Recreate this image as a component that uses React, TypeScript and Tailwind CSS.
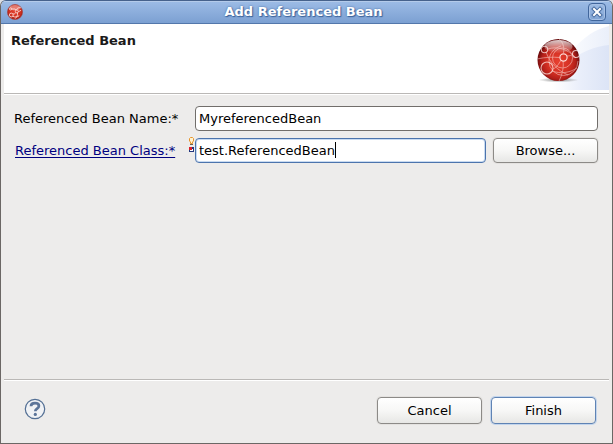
import { useState } from "react";
import type { ReactNode } from "react";
import clsx from "clsx";

const fieldClass =
  "h-[25px] w-full min-w-0 rounded-[4px] border bg-white px-[3px] text-[13px] text-black outline-none";

function TitleIcon() {
  return (
    <svg viewBox="0 0 16 16" className="size-4 shrink-0" aria-hidden="true">
      <defs>
        <radialGradient id="smallBall" cx="50%" cy="45%" r="55%">
          <stop offset="0" stopColor="#e5412f" />
          <stop offset="0.7" stopColor="#d0301f" />
          <stop offset="1" stopColor="#9c1c16" />
        </radialGradient>
      </defs>
      <circle cx="8" cy="8" r="7.6" fill="url(#smallBall)" stroke="#a8433f" strokeWidth="0.6" />
      <ellipse cx="8" cy="3.8" rx="5.4" ry="2.8" fill="#fff" opacity="0.35" />
      <g fill="none" stroke="#fbd5cf" strokeWidth="0.9">
        <circle cx="4.3" cy="11" r="1.9" />
        <circle cx="9.8" cy="7.4" r="1.5" />
        <circle cx="3.6" cy="4.9" r="1.1" />
        <path d="M4.7 5h3.400l1 1.200M11.200 7.800l2.900-1.500M10.500 9c.3 2.400-.7 4-2.300 5.600M6 10c1.400-.2 2 .2 2.700-1.500M5.800 12.300c2.100 1.100 4.400.8 6.400-.6M13.800 3.800c-1.900-.6-4 .2-4.500 2.100" />
      </g>
    </svg>
  );
}

function BannerArt() {
  return (
    <svg viewBox="0 0 75 66" className="h-[66px] w-[75px] shrink-0" aria-hidden="true">
      <defs>
        <linearGradient id="washFront" gradientUnits="userSpaceOnUse" x1="18" y1="0" x2="75" y2="0">
          <stop offset="0" stopColor="#fff" />
          <stop offset="0.5" stopColor="#e9eefa" />
          <stop offset="1" stopColor="#dce4f6" />
        </linearGradient>
        <linearGradient id="washBack" gradientUnits="userSpaceOnUse" x1="25" y1="0" x2="75" y2="0">
          <stop offset="0" stopColor="#fff" />
          <stop offset="1" stopColor="#eaeffa" />
        </linearGradient>
        <radialGradient id="ball" cx="50%" cy="55%" r="52%">
          <stop offset="0" stopColor="#e84232" />
          <stop offset="0.5" stopColor="#d63225" />
          <stop offset="0.78" stopColor="#b3201a" />
          <stop offset="1" stopColor="#65090b" />
        </radialGradient>
        <linearGradient id="gloss" x1="0" y1="0" x2="0" y2="1">
          <stop offset="0" stopColor="#fff" stopOpacity="0.8" />
          <stop offset="1" stopColor="#fff" stopOpacity="0.05" />
        </linearGradient>
        <radialGradient id="shadow">
          <stop offset="0" stopColor="#555" stopOpacity="0.7" />
          <stop offset="1" stopColor="#555" stopOpacity="0" />
        </radialGradient>
        <clipPath id="ballClip">
          <circle cx="24.500" cy="36" r="21" />
        </clipPath>
      </defs>
      <path d="M20 66C26 36 48 8 75 2v64z" fill="url(#washBack)" />
      <path d="M12 66C22 46 44 24 75 21v45z" fill="url(#washFront)" />
      <ellipse cx="24.500" cy="56" rx="20" ry="2.400" fill="url(#shadow)" />
      <circle cx="24.500" cy="36" r="21" fill="url(#ball)" />
      <ellipse cx="24.500" cy="22.500" rx="14" ry="6.500" fill="url(#gloss)" />
      <g clipPath="url(#ballClip)" fill="none" stroke="#ffe9e4">
        <g strokeWidth="0.8" opacity="0.6">
          <path d="M44 37a14.500 14.500 0 0 1-29 0c0-7 5-13 12-15" />
          <circle cx="28.500" cy="34" r="10" />
          <path d="M3 35c9-2 16-2 22.500-1.500M14 25c9-3 20 0 28 9M12 28c4 11 11 18 22 23M25 15c4 3 5.500 8 4.500 14M29 37c1 7-1 14-4 20M33 32c3 0 5-1 6-2M19 45c3-1 6-5 8-9M18 47c9 3 17 2 25-3" />
        </g>
        <circle cx="13" cy="44" r="6" strokeWidth="1.100" opacity="0.750" />
        <circle cx="29.500" cy="33.500" r="3.600" strokeWidth="1.200" opacity="0.900" />
        <circle cx="10.500" cy="25.500" r="3.200" strokeWidth="1.100" opacity="0.750" />
        <circle cx="42" cy="30" r="3.500" strokeWidth="1.100" opacity="0.800" />
      </g>
    </svg>
  );
}

function AssistMark() {
  return (
    <svg viewBox="0 0 6 17" className="absolute -top-px -left-1.5 h-[17px] w-1.5" aria-hidden="true">
      <path d="M1.500.5h2l1 1v2.500l-1 1v1.500h-2V5l-1-1V1.500z" fill="#fff3cf" stroke="#e6942d" />
      <path d="M1 7h3v1H1z" fill="#6a6252" />
      <path d="M0 10h5v5H0z" fill="#24377e" />
      <path d="M2 12h2v2H1v-1h1z" fill="#fff" />
      <path d="M0 10h3v3H0z" fill="#d9202a" />
    </svg>
  );
}

function PushButton({ primary, children }: { primary?: boolean; children: ReactNode }) {
  return (
    <button
      type="button"
      className={clsx(
        "w-[105px] shrink-0 rounded-[4px] border bg-linear-to-b from-white from-0% via-[#f7f7f6] via-50% to-[#e7e7e5] text-[13px] text-black",
        primary
          ? "border-[#5f83b4] shadow-[0_0_0_1px_#c3d5ec]"
          : "border-[#8c8a87] shadow-[0_0_0_1px_#e4e2e0]",
      )}
    >
      {children}
    </button>
  );
}

export default function App() {
  const [name, setName] = useState("MyreferencedBean");
  const [beanClass, setBeanClass] = useState("test.ReferencedBean");

  return (
    <div className="min-h-screen bg-[#dcdfe5] font-['DejaVu_Sans',sans-serif] text-[13px] leading-4 text-black">
      <div className="flex min-h-screen flex-col overflow-hidden rounded-t-[6px] border border-t-[#46628c] border-r-[#6b6765] border-b-[#6b6765] border-l-[#6b6765] bg-[#edeceb]">
        <header className="flex h-[23px] shrink-0 items-center border-b border-[#5377ab] bg-linear-to-b from-[#9dbce6] to-[#7ca0d2] px-1.5 shadow-[inset_0_1px_0_#b4cbea]">
          <TitleIcon />
          <h1 className="flex-1 pr-1 text-center text-[13px] font-bold text-white [text-shadow:0_0_2px_#3c639b,1px_1px_1px_#3c639b]">
            Add Referenced Bean
          </h1>
          <button
            type="button"
            aria-label="Close"
            className="flex size-[18px] items-center justify-center rounded-[4px] border border-[#41669c] bg-linear-to-b from-[#9dbbe3] to-[#81a4d4] shadow-[inset_0_0_0_1px_#a6c0e5]"
          >
            <svg viewBox="0 0 12 12" className="size-3" aria-hidden="true">
              <path d="M3 3l6 6M9 3l-6 6" stroke="#476b9f" strokeWidth="4" strokeLinecap="square" />
              <path d="M3 3l6 6M9 3l-6 6" stroke="#fff" strokeWidth="2" strokeLinecap="square" />
            </svg>
          </button>
        </header>

        <main className="mx-[3px] flex flex-1 flex-col">
          <section className="flex h-[69px] items-start justify-between bg-white pl-[7px]">
            <h2 className="pt-[9px] text-[13px] font-bold text-[#1a1a1a]">Referenced Bean</h2>
            <BannerArt />
          </section>

          <form
            className="grid flex-1 grid-cols-[174px_1fr] content-start items-center gap-[7px] border-t border-[#bab8b6] pt-3 pr-[11px] pl-2.5 shadow-[inset_0_1px_0_#fff]"
            onSubmit={(e) => e.preventDefault()}
          >
            <label htmlFor="bean-name">Referenced Bean Name:*</label>
            <input
              id="bean-name"
              className={clsx(fieldClass, "border-[#716e6b]")}
              value={name}
              onChange={(e) => setName(e.target.value)}
            />

            <label htmlFor="bean-class" className="pl-px">
              <a href="#bean-class" className="text-[#00007f] underline decoration-1 underline-offset-2 [text-decoration-skip-ink:none]">
                Referenced Bean Class:*
              </a>
            </label>
            <div className="flex gap-[7px]">
              <div className="relative flex-1">
                <AssistMark />
                <input
                  id="bean-class"
                  className={clsx(fieldClass, "block border-[#4c74ad] caret-transparent shadow-[inset_0_0_0_1px_#c9dbf1]")}
                  value={beanClass}
                  onChange={(e) => setBeanClass(e.target.value)}
                />
                <span className="absolute top-1 left-[140px] h-4 w-px bg-black" />
              </div>
              <PushButton>Browse...</PushButton>
            </div>
          </form>

          <footer className="flex h-16 items-center justify-between border-t border-[#bab8b6] pr-[13px] pb-0.5 pl-5 shadow-[inset_0_1px_0_#fff]">
            <button type="button" aria-label="Help" className="mb-1 size-[22px]">
              <svg viewBox="0 0 22 22" className="size-[22px]" aria-hidden="true">
                <circle cx="11" cy="11" r="9.700" fill="#f0f2f5" stroke="#536f94" strokeWidth="1.200" />
                <path
                  d="M7 8.300C7 5.900 8.700 5.200 11 5.200s3.900 1 3.900 2.800c0 2.700-3.600 2.500-3.600 5.200"
                  fill="none"
                  stroke="#5b7499"
                  strokeWidth="2.700"
                />
                <circle cx="11.300" cy="16.400" r="1.600" fill="#5b7499" />
              </svg>
            </button>
            <div className="flex h-[27px] gap-[9px]">
              <PushButton>Cancel</PushButton>
              <PushButton primary>Finish</PushButton>
            </div>
          </footer>
        </main>
      </div>
    </div>
  );
}
